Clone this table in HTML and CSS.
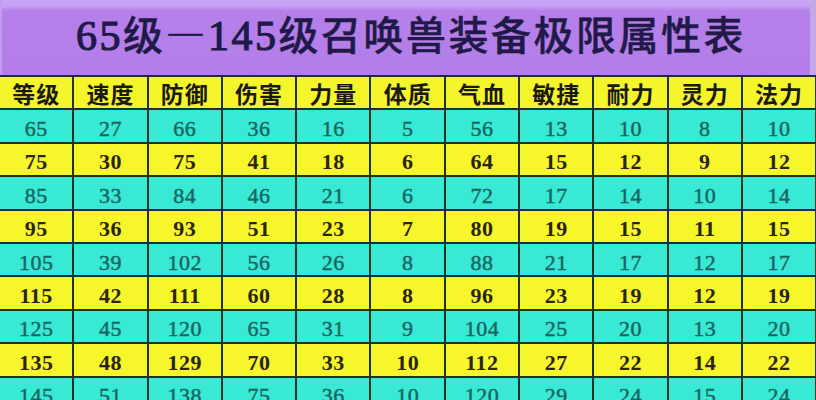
FILE: index.html
```html
<!DOCTYPE html>
<html lang="zh-CN">
<head>
<meta charset="utf-8">
<title>65级—145级召唤兽装备极限属性表</title>
<link rel="stylesheet" href="styles.css">
</head>
<body>
<div class="sheet">
  <header class="banner">
    <h1 class="title"><span class="num">65</span>级—<span class="num">145</span>级召唤兽装备极限属性表</h1>
  </header>
  <div class="grid">
    <div class="cell head">等级</div><div class="cell head">速度</div><div class="cell head">防御</div><div class="cell head">伤害</div><div class="cell head">力量</div><div class="cell head">体质</div><div class="cell head">气血</div><div class="cell head">敏捷</div><div class="cell head">耐力</div><div class="cell head">灵力</div><div class="cell head">法力</div>

    <div class="cell c">65</div><div class="cell c">27</div><div class="cell c">66</div><div class="cell c">36</div><div class="cell c">16</div><div class="cell c">5</div><div class="cell c">56</div><div class="cell c">13</div><div class="cell c">10</div><div class="cell c">8</div><div class="cell c">10</div>

    <div class="cell y">75</div><div class="cell y">30</div><div class="cell y">75</div><div class="cell y">41</div><div class="cell y">18</div><div class="cell y">6</div><div class="cell y">64</div><div class="cell y">15</div><div class="cell y">12</div><div class="cell y">9</div><div class="cell y">12</div>

    <div class="cell c">85</div><div class="cell c">33</div><div class="cell c">84</div><div class="cell c">46</div><div class="cell c">21</div><div class="cell c">6</div><div class="cell c">72</div><div class="cell c">17</div><div class="cell c">14</div><div class="cell c">10</div><div class="cell c">14</div>

    <div class="cell y">95</div><div class="cell y">36</div><div class="cell y">93</div><div class="cell y">51</div><div class="cell y">23</div><div class="cell y">7</div><div class="cell y">80</div><div class="cell y">19</div><div class="cell y">15</div><div class="cell y">11</div><div class="cell y">15</div>

    <div class="cell c">105</div><div class="cell c">39</div><div class="cell c">102</div><div class="cell c">56</div><div class="cell c">26</div><div class="cell c">8</div><div class="cell c">88</div><div class="cell c">21</div><div class="cell c">17</div><div class="cell c">12</div><div class="cell c">17</div>

    <div class="cell y">115</div><div class="cell y">42</div><div class="cell y">111</div><div class="cell y">60</div><div class="cell y">28</div><div class="cell y">8</div><div class="cell y">96</div><div class="cell y">23</div><div class="cell y">19</div><div class="cell y">12</div><div class="cell y">19</div>

    <div class="cell c">125</div><div class="cell c">45</div><div class="cell c">120</div><div class="cell c">65</div><div class="cell c">31</div><div class="cell c">9</div><div class="cell c">104</div><div class="cell c">25</div><div class="cell c">20</div><div class="cell c">13</div><div class="cell c">20</div>

    <div class="cell y">135</div><div class="cell y">48</div><div class="cell y">129</div><div class="cell y">70</div><div class="cell y">33</div><div class="cell y">10</div><div class="cell y">112</div><div class="cell y">27</div><div class="cell y">22</div><div class="cell y">14</div><div class="cell y">22</div>

    <div class="cell c">145</div><div class="cell c">51</div><div class="cell c">138</div><div class="cell c">75</div><div class="cell c">36</div><div class="cell c">10</div><div class="cell c">120</div><div class="cell c">29</div><div class="cell c">24</div><div class="cell c">15</div><div class="cell c">24</div>
  </div>
</div>
</body>
</html>
```

FILE: styles.css
```css
html, body {
  margin: 0;
  padding: 0;
  background: #1d321f;
  overflow: hidden;
}

.sheet {
  width: 816px;
  height: 400px;
  overflow: hidden;
  background: #1d321f;
}

.banner {
  height: 75px;
  box-sizing: border-box;
  background: linear-gradient(to bottom, #caa6f5 0, #c6a0f3 6px, #b580ea 11px, #b47ee8 100%);
  border-right: 6px solid #c4a8e6;
  border-left: 2px solid #c09cf0;
  display: flex;
  align-items: center;
  justify-content: center;
  padding-bottom: 5px;
}

.title {
  margin: 0;
  font-family: "Noto Sans CJK SC", "Liberation Serif", sans-serif;
  font-weight: 500;
  font-size: 40px;
  letter-spacing: 2.5px;
  color: #211a48;
  line-height: 1;
  padding-left: 10px;
  -webkit-text-stroke: 0.4px #211a48;
}

.title .num {
  font-family: "Liberation Serif", serif;
  font-size: 42px;
  font-weight: 400;
  -webkit-text-stroke: 1.2px #211a48;
}

.grid {
  display: grid;
  grid-template-columns: repeat(11, 72.3px);
  grid-auto-rows: 31.4px;
  gap: 2px;
  padding-top: 2px;
  background: #1d321f;
}

.cell {
  display: flex;
  align-items: center;
  justify-content: center;
  box-sizing: border-box;
  padding-top: 6px;
  font-family: "Liberation Serif", serif;
  font-size: 22px;
  line-height: 1;
  letter-spacing: 0.5px;
}

.head {
  background: #f5f52c;
  color: #1b1a10;
  font-family: "Noto Sans CJK SC", sans-serif;
  font-weight: 700;
  font-size: 23px;
  letter-spacing: 1px;
  padding-top: 2px;
}

.c {
  background: #38e9d5;
  color: #1a6461;
  -webkit-text-stroke: 0.45px #1a6461;
}

.y {
  background: #f6f62a;
  color: #2a2410;
  font-weight: 700;
}
```
